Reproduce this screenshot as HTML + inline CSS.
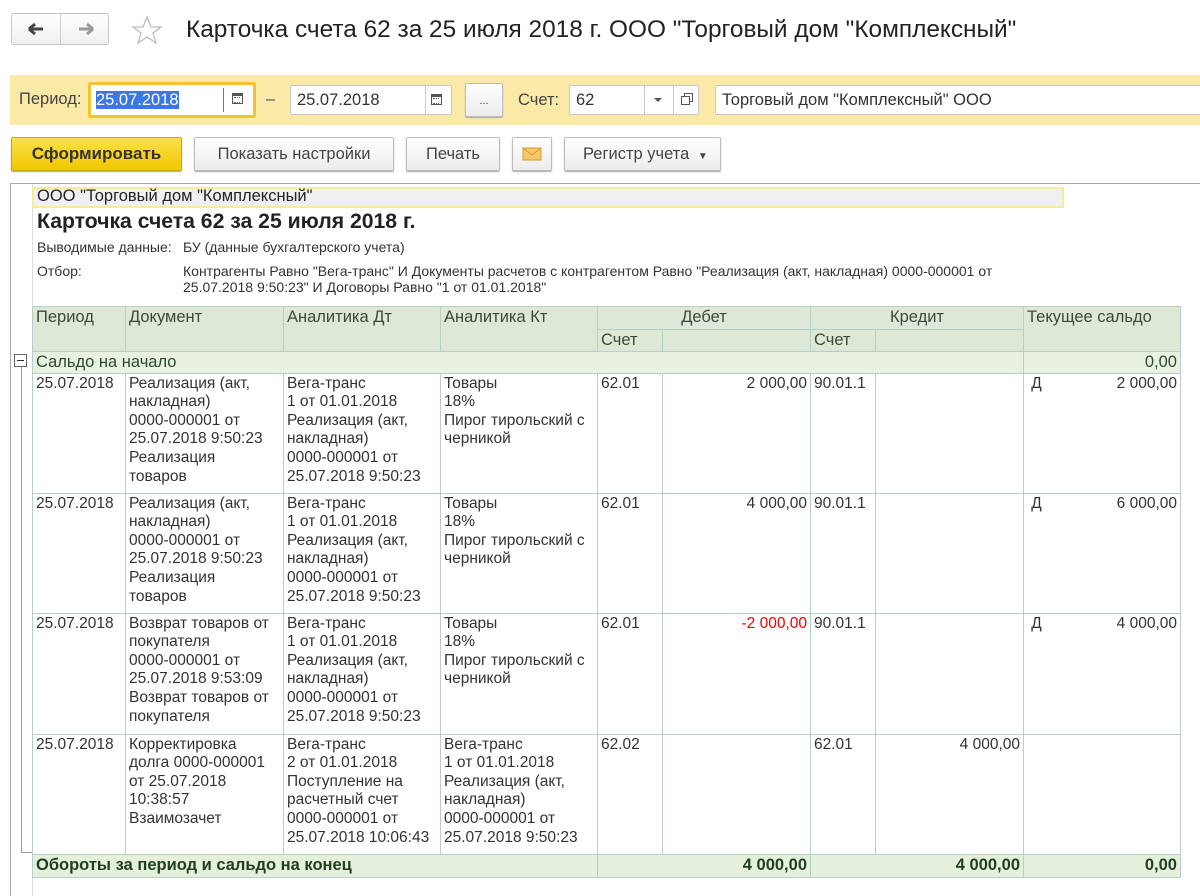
<!DOCTYPE html>
<html><head><meta charset="utf-8">
<style>
*{box-sizing:border-box;margin:0;padding:0}
body{width:1200px;height:896px;overflow:hidden;background:#fff;font-family:"Liberation Sans",Arial,sans-serif;color:#333;position:relative}
.a{position:absolute}
.btn{position:absolute;border:1px solid #bdbdbd;border-radius:2px;background:linear-gradient(#fff,#ececec);box-shadow:0 1px 1px #aaa;font-size:16.5px;color:#444;text-align:center;line-height:32px;height:34px}
.inp{position:absolute;background:#fff;border:1px solid #c8c8c8;border-radius:2px;height:30px;font-size:16.5px;line-height:28px;padding-left:6px;color:#333}
table{position:absolute;left:32px;top:306px;border-collapse:collapse;table-layout:fixed;font-size:15.5px;line-height:18.6px;color:#333}
td{border:1px solid #b7d0c6;vertical-align:top;padding:1px 3px;overflow:hidden;white-space:nowrap}
.h td{background:#dde9d6;color:#3a4a3a;font-size:16.5px}
.r{text-align:right}
.sal td{background:#e9f2e2;color:#2d4a2d;font-size:16.5px;height:22px;padding-top:1px}
.ft td{background:#e4efdc;color:#1f3f1f;font-weight:bold;font-size:16.5px;height:23px}
.cal{position:absolute;width:11px;height:11px;border:1.5px solid #555;border-top-width:3px}
.cal:after{content:"";position:absolute;left:1px;top:1px;width:6px;height:4px;border-top:1px dotted #555;border-bottom:1px dotted #555}
</style></head><body>
<div class="a" style="left:11px;top:13px;width:98px;height:32px;border:1px solid #c6c6c6;border-radius:3px;background:linear-gradient(#fff,#f0f0f0)"></div>
<div class="a" style="left:60px;top:14px;width:1px;height:30px;background:#d0d0d0"></div>
<svg class="a" style="left:26px;top:20px" width="70" height="18"><path d="M3 9h14M3 9l6-5M3 9l6 5" stroke="#444" stroke-width="3" fill="none"/><path d="M67 9H53M67 9l-6-5M67 9l-6 5" stroke="#999" stroke-width="3" fill="none"/></svg>
<svg class="a" style="left:131px;top:15px" width="32" height="30"><path d="M16 2l4 10h10l-8 6 3 10-9-6-9 6 3-10-8-6h10z" fill="none" stroke="#bbb" stroke-width="1.3"/></svg>
<div class="a" style="left:186px;top:16px;font-size:24.4px;color:#222;white-space:nowrap">Карточка счета 62 за 25 июля 2018 г. ООО "Торговый дом "Комплексный"</div>
<div class="a" style="left:10px;top:75px;width:1190px;height:50px;background:#fbe9a8"></div>
<div class="a" style="left:19px;top:90px;font-size:16.5px;color:#444">Период:</div>
<div class="inp" style="left:88px;top:82px;width:168px;height:36px;border:3px solid #f4c430;line-height:30px;padding-left:5px"><span style="background:#3b78e7;color:#fff">25.07.2018</span></div>
<div class="a" style="left:223px;top:88px;width:1px;height:24px;background:#777"></div>
<div class="cal" style="left:232px;top:93px"></div>
<div class="a" style="left:266px;top:91px;font-size:16px;color:#444">–</div>
<div class="inp" style="left:290px;top:85px;width:162px">25.07.2018</div>
<div class="a" style="left:425px;top:86px;width:1px;height:28px;background:#ccc"></div>
<div class="cal" style="left:431px;top:94px"></div>
<div class="btn" style="left:465px;top:83px;width:38px;font-size:11px;line-height:34px">...</div>
<div class="a" style="left:518px;top:91px;font-size:16.5px;color:#444">Счет:</div>
<div class="inp" style="left:569px;top:85px;width:130px">62</div>
<div class="a" style="left:644px;top:86px;width:1px;height:28px;background:#ccc"></div>
<div class="a" style="left:673px;top:86px;width:1px;height:28px;background:#ccc"></div>
<div class="a" style="left:654px;top:98px;border:4px solid transparent;border-top:4px solid #555"></div>
<div class="a" style="left:684px;top:93px;width:9px;height:9px;border:1.5px solid #555"></div>
<div class="a" style="left:681px;top:96px;width:9px;height:9px;border:1.5px solid #555;background:#fff"></div>
<div class="inp" style="left:715px;top:85px;width:490px">Торговый дом "Комплексный" ООО</div>
<div class="btn" style="left:11px;top:137px;width:171px;background:linear-gradient(#fbe04a,#f1c800);border-color:#c9a800;color:#333;font-weight:bold;font-size:17px">Сформировать</div>
<div class="btn" style="left:194px;top:137px;width:200px">Показать настройки</div>
<div class="btn" style="left:406px;top:137px;width:94px">Печать</div>
<div class="btn" style="left:512px;top:137px;width:40px"><svg width="20" height="14" style="margin-top:9px"><rect x="1" y="1" width="18" height="12" fill="#f6c96a" stroke="#d89a2a"/><path d="M1 1l9 7 9-7" fill="none" stroke="#d89a2a"/></svg></div>
<div class="btn" style="left:564px;top:137px;width:157px;text-align:left;padding-left:18px">Регистр учета <span style="font-size:10px;margin-left:4px">▼</span></div>
<div class="a" style="left:10px;top:183px;width:1190px;height:1px;background:#aaa"></div>
<div class="a" style="left:10px;top:183px;width:1px;height:713px;background:#aaa"></div>
<div class="a" style="left:32px;top:184px;width:1px;height:712px;background:#ddd"></div>
<div class="a" style="left:32px;top:187px;width:1032px;height:21px;background:#f0f0f0;border:2px solid #f8ec9a"></div>
<div class="a" style="left:37px;top:187px;font-size:16.5px;color:#222">ООО "Торговый дом "Комплексный"</div>
<div class="a" style="left:37px;top:210px;font-size:21.2px;font-weight:bold;color:#222">Карточка счета 62 за 25 июля 2018 г.</div>
<div class="a" style="left:37px;top:239px;font-size:14px;color:#333">Выводимые данные:</div>
<div class="a" style="left:183px;top:239px;font-size:14px;color:#333">БУ (данные бухгалтерского учета)</div>
<div class="a" style="left:37px;top:263px;font-size:14px;color:#333">Отбор:</div>
<div class="a" style="left:183px;top:263px;font-size:14px;color:#333;line-height:16px;white-space:nowrap">Контрагенты Равно "Вега-транс" И Документы расчетов с контрагентом Равно "Реализация (акт, накладная) 0000-000001 от<br>25.07.2018 9:50:23" И Договоры Равно "1 от 01.01.2018"</div>
<div class="a" style="left:14px;top:354px;width:13px;height:13px;border:1px solid #666;background:#fff"></div>
<div class="a" style="left:17px;top:360px;width:7px;height:1px;background:#333"></div>
<div class="a" style="left:21px;top:367px;width:1px;height:486px;background:#999"></div>
<div class="a" style="left:21px;top:852px;width:11px;height:1px;background:#999"></div>
<table>
<colgroup><col style="width:93px"><col style="width:158px"><col style="width:157px"><col style="width:157px"><col style="width:65px"><col style="width:148px"><col style="width:65px"><col style="width:148px"><col style="width:157px"></colgroup>
<tr class="h" style="height:23px"><td rowspan="2">Период</td><td rowspan="2">Документ</td><td rowspan="2">Аналитика Дт</td><td rowspan="2">Аналитика Кт</td><td colspan="2" style="text-align:center">Дебет</td><td colspan="2" style="text-align:center">Кредит</td><td rowspan="2">Текущее сальдо</td></tr>
<tr class="h" style="height:21px"><td>Счет</td><td></td><td>Счет</td><td></td></tr>
<tr class="sal"><td colspan="8">Сальдо на начало</td><td class="r">0,00</td></tr>
<tr style="height:120px"><td>25.07.2018</td><td>Реализация (акт,<br>накладная)<br>0000-000001 от<br>25.07.2018 9:50:23<br>Реализация<br>товаров</td><td>Вега-транс<br>1 от 01.01.2018<br>Реализация (акт,<br>накладная)<br>0000-000001 от<br>25.07.2018 9:50:23</td><td>Товары<br>18%<br>Пирог тирольский с<br>черникой</td><td>62.01</td><td class="r">2 000,00</td><td>90.01.1</td><td></td><td>&nbsp;Д<span style="float:right">2 000,00</span></td></tr>
<tr style="height:120px"><td>25.07.2018</td><td>Реализация (акт,<br>накладная)<br>0000-000001 от<br>25.07.2018 9:50:23<br>Реализация<br>товаров</td><td>Вега-транс<br>1 от 01.01.2018<br>Реализация (акт,<br>накладная)<br>0000-000001 от<br>25.07.2018 9:50:23</td><td>Товары<br>18%<br>Пирог тирольский с<br>черникой</td><td>62.01</td><td class="r">4 000,00</td><td>90.01.1</td><td></td><td>&nbsp;Д<span style="float:right">6 000,00</span></td></tr>
<tr style="height:121px"><td>25.07.2018</td><td>Возврат товаров от<br>покупателя<br>0000-000001 от<br>25.07.2018 9:53:09<br>Возврат товаров от<br>покупателя</td><td>Вега-транс<br>1 от 01.01.2018<br>Реализация (акт,<br>накладная)<br>0000-000001 от<br>25.07.2018 9:50:23</td><td>Товары<br>18%<br>Пирог тирольский с<br>черникой</td><td>62.01</td><td class="r" style="color:#e00">-2 000,00</td><td>90.01.1</td><td></td><td>&nbsp;Д<span style="float:right">4 000,00</span></td></tr>
<tr style="height:120px"><td>25.07.2018</td><td>Корректировка<br>долга 0000-000001<br>от 25.07.2018<br>10:38:57<br>Взаимозачет</td><td>Вега-транс<br>2 от 01.01.2018<br>Поступление на<br>расчетный счет<br>0000-000001 от<br>25.07.2018 10:06:43</td><td>Вега-транс<br>1 от 01.01.2018<br>Реализация (акт,<br>накладная)<br>0000-000001 от<br>25.07.2018 9:50:23</td><td>62.02</td><td></td><td>62.01</td><td class="r">4 000,00</td><td></td></tr>
<tr class="ft"><td colspan="4">Обороты за период и сальдо на конец</td><td colspan="2" class="r">4 000,00</td><td colspan="2" class="r">4 000,00</td><td class="r">0,00</td></tr>
</table>
</body></html>
